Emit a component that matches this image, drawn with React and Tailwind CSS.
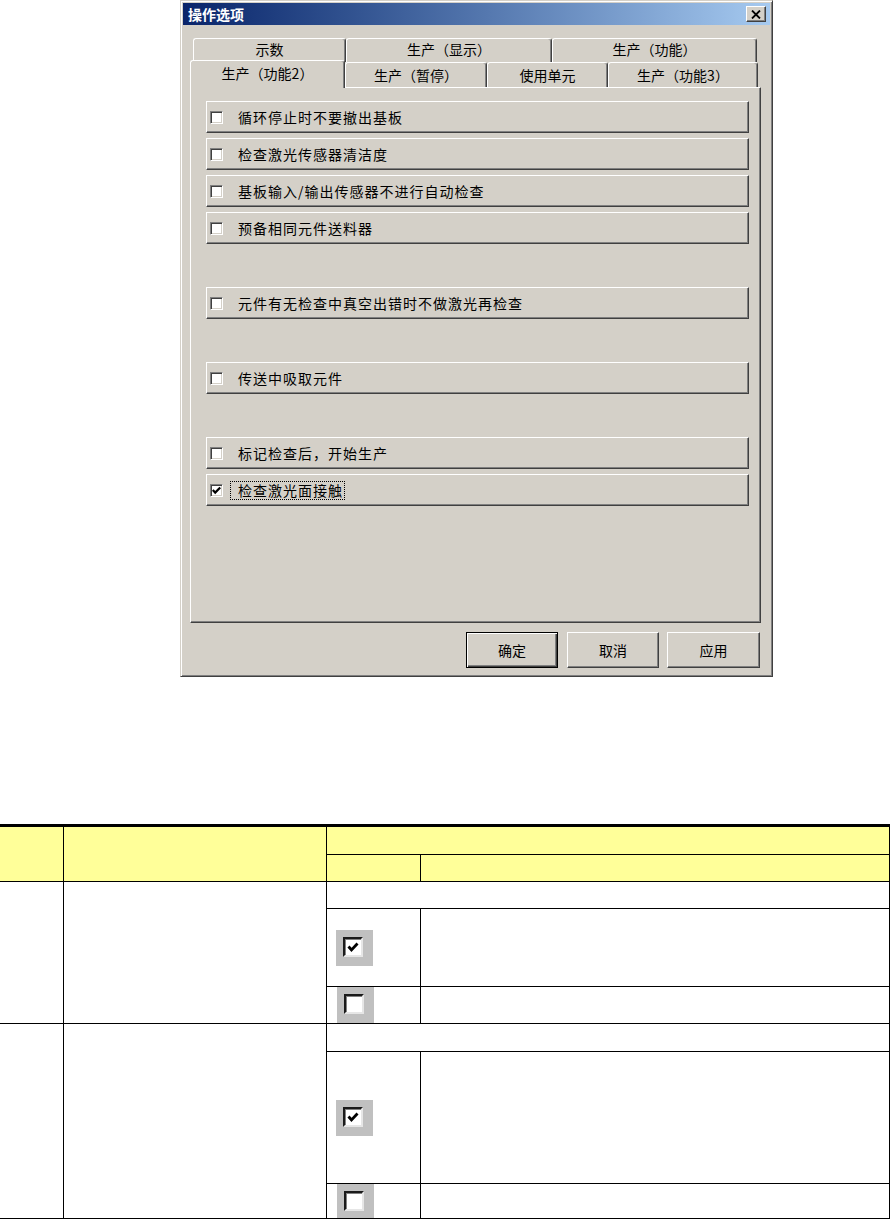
import React from "react";

const raised =
  "border border-t-white border-l-white border-r-[#404040] border-b-[#404040] shadow-[inset_-1px_-1px_0_#808080]";

function WinCheck({ checked }) {
  return (
    <span className="relative inline-block shrink-0 w-[13px] h-[13px] bg-white border border-t-[#808080] border-l-[#808080] border-r-white border-b-white shadow-[inset_1px_1px_0_#404040,inset_-1px_-1px_0_#d4d0c8]">
      {checked && (
        <svg className="absolute left-0 top-0" width="11" height="11" viewBox="0 0 11 11">
          <path d="M1.8 5 L4.2 7.6 L9.2 2.4" stroke="#000" strokeWidth="2.2" fill="none" />
        </svg>
      )}
    </span>
  );
}

function OptionRow({ label, checked, focused, className = "" }) {
  return (
    <div className={`h-[32px] w-[543px] flex items-center bg-[#d4d0c8] ${raised} ${className}`}>
      <span className="ml-[3px] flex">
        <WinCheck checked={checked} />
      </span>
      {focused ? (
        <span className="ml-[7px] pl-[7px] pr-[1px] h-[19px] flex items-center border border-dotted border-black text-[14px] tracking-[1px] leading-none">
          {label}
        </span>
      ) : (
        <span className="ml-[15px] text-[14px] tracking-[1px] leading-none">{label}</span>
      )}
    </div>
  );
}

function Tab({ label, w, className = "" }) {
  return (
    <div
      className={`${w} flex items-center justify-center bg-[#d4d0c8] border-t border-l border-r border-t-white border-l-white border-r-[#404040] shadow-[inset_-1px_0_0_#808080] rounded-t-[3px] text-[14px] leading-none ${className}`}
    >
      {label}
    </div>
  );
}

function Dialog() {
  return (
    <div className="ml-[180px] w-[593px] h-[677px] bg-[#d4d0c8] border border-t-[#d4d0c8] border-l-[#d4d0c8] border-r-[#404040] border-b-[#404040] shadow-[inset_1px_1px_0_#fff,inset_-1px_-1px_0_#808080] p-[2px] flex flex-col">
      <div className="h-[22px] flex items-center justify-between pl-[5px] pr-[4px] bg-linear-to-r from-[#0a246a] to-[#a6caf0]">
        <span className="text-[14px] font-bold text-white leading-none">操作选项</span>
        <div className={`w-[20px] h-[16px] bg-[#d4d0c8] ${raised} flex items-center justify-center`}>
          <svg width="10" height="9" viewBox="0 0 10 9">
            <path d="M1 0.5 L9 8.5 M9 0.5 L1 8.5" stroke="#000" strokeWidth="1.8" />
          </svg>
        </div>
      </div>

      <div className="pl-[7px] pr-[9px] pt-[13px] flex flex-col">
        <div className="flex ml-[3px] h-[24px]">
          <Tab label="示数" w="w-[153px]" className="h-[24px] pb-[3px]" />
          <Tab label="生产（显示）" w="w-[206px]" className="h-[24px] pb-[3px]" />
          <Tab label="生产（功能）" w="w-[205px]" className="h-[24px] pb-[3px]" />
        </div>
        <div className="flex h-[25px] items-start relative z-10">
          <Tab label="生产（功能2）" w="w-[155px]" className="h-[28px] -mt-[2px] pb-[3px]" />
          <Tab label="生产（暂停）" w="w-[142px]" className="h-[25px]" />
          <Tab label="使用单元" w="w-[121px]" className="h-[25px]" />
          <Tab label="生产（功能3）" w="w-[150px]" className="h-[25px]" />
        </div>
        <div className={`h-[536px] w-[571px] ${raised} pt-[13px] pl-[15px] flex flex-col gap-[5px]`}>
          <OptionRow label="循环停止时不要撤出基板" />
          <OptionRow label="检查激光传感器清洁度" />
          <OptionRow label="基板输入/输出传感器不进行自动检查" />
          <OptionRow label="预备相同元件送料器" />
          <OptionRow label="元件有无检查中真空出错时不做激光再检查" className="mt-[38px]" />
          <OptionRow label="传送中吸取元件" className="mt-[38px]" />
          <OptionRow label="标记检查后，开始生产" className="mt-[38px]" />
          <OptionRow label="检查激光面接触" checked focused />
        </div>
        <div className="flex justify-end mt-[9px] mr-[1px] gap-[8px]">
          <button className="w-[92px] h-[36px] mr-[1px] bg-[#d4d0c8] border border-black shadow-[inset_1px_1px_0_#fff,inset_-1px_-1px_0_#404040,inset_-2px_-2px_0_#808080] text-[14px] leading-none">
            确定
          </button>
          <button className={`w-[92px] h-[36px] bg-[#d4d0c8] ${raised} text-[14px] leading-none`}>取消</button>
          <button className={`w-[93px] h-[36px] bg-[#d4d0c8] ${raised} text-[14px] leading-none`}>应用</button>
        </div>
      </div>
    </div>
  );
}

function PicCheck({ checked, short }) {
  return (
    <div className={`w-[37px] ${short ? "h-[34px]" : "h-[36px]"} bg-[#c0c0c0] pl-[7px] pt-[7px] overflow-hidden`}>
      <div className="relative w-[20px] h-[20px] bg-white border-2 border-t-[#1a1a1a] border-l-[#1a1a1a] border-r-[#e6e6e6] border-b-[#e6e6e6] shadow-[inset_1px_1px_0_#808080]">
        {checked && (
          <svg className="absolute left-0 top-0" width="16" height="16" viewBox="0 0 16 16">
            <path d="M3.5 7.5 L6.5 11 L12.5 4.5" stroke="#000" strokeWidth="2.8" fill="none" />
          </svg>
        )}
      </div>
    </div>
  );
}

const cell = "border border-black p-0";

function Table() {
  return (
    <table className="mt-[147px] border-collapse table-fixed w-[890px]">
      <colgroup>
        <col className="w-[63px]" />
        <col className="w-[263px]" />
        <col className="w-[94px]" />
        <col />
      </colgroup>
      <tbody>
        <tr className="h-[29px]">
          <td rowSpan={2} className={`${cell} border-l-0 border-t-[3px] bg-[#ffff99]`}></td>
          <td rowSpan={2} className={`${cell} border-t-[3px] bg-[#ffff99]`}></td>
          <td colSpan={2} className={`${cell} border-t-[3px] bg-[#ffff99]`}></td>
        </tr>
        <tr className="h-[27px]">
          <td className={`${cell} bg-[#ffff99]`}></td>
          <td className={`${cell} bg-[#ffff99]`}></td>
        </tr>

        <tr className="h-[27px]">
          <td rowSpan={3} className={`${cell} border-l-0`}></td>
          <td rowSpan={3} className={cell}></td>
          <td colSpan={2} className={cell}></td>
        </tr>
        <tr className="h-[78px]">
          <td className={`${cell} pl-[9px] align-middle`}>
            <PicCheck checked />
          </td>
          <td className={cell}></td>
        </tr>
        <tr className="h-[37px]">
          <td className={`${cell} pl-[10px] align-middle`}>
            <PicCheck />
          </td>
          <td className={cell}></td>
        </tr>

        <tr className="h-[28px]">
          <td rowSpan={3} className={`${cell} border-l-0`}></td>
          <td rowSpan={3} className={cell}></td>
          <td colSpan={2} className={cell}></td>
        </tr>
        <tr className="h-[132px]">
          <td className={`${cell} pl-[9px] align-middle`}>
            <PicCheck checked />
          </td>
          <td className={cell}></td>
        </tr>
        <tr className="h-[35px]">
          <td className={`${cell} pl-[10px] align-middle`}>
            <PicCheck short />
          </td>
          <td className={cell}></td>
        </tr>
      </tbody>
    </table>
  );
}

export default function App() {
  return (
    <div className="w-[890px] h-[1219px] bg-white font-['Noto_Sans_CJK_SC','Liberation_Sans',sans-serif] text-black overflow-hidden">
      <Dialog />
      <Table />
    </div>
  );
}
